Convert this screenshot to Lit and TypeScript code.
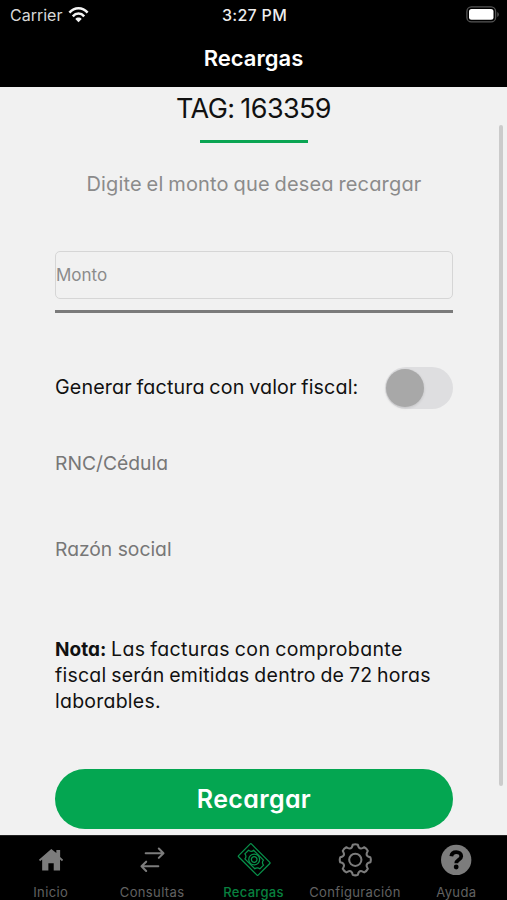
import { LitElement, html, css, svg } from "lit";
import { customElement, property, state } from "lit/decorators.js";
import { classMap } from "lit/directives/class-map.js";

const icons: Record<string, unknown> = {
  home: svg`<path fill="currentColor" d="M18.300 6.200 5.600 17.200l1.200 1.500L8.900 17V28.300h6.400v-7.500h5.500v7.500h6.500V17l2 1.700 1.200-1.500-3.100-2.700V7.100h-3.900v3.200z"/>`,
  swap: svg`<g fill="none" stroke="currentColor" stroke-width="2.100" stroke-linecap="round" stroke-linejoin="round"><path d="M11.500 10.500H29.500M25 5.700l4.800 4.800L25 15.300"/><path d="M24.500 24H7.500M12 19.200 7.200 24l4.800 4.800"/></g>`,
  bill: svg`<g transform="translate(18.200 17) rotate(45)" fill="none" stroke="currentColor" stroke-width="1.300" stroke-linejoin="round"><rect x="-14.200" y="-9.300" width="28.400" height="18.600" rx=".8"/><path d="M-7.200-6.300H7.200A3.600 3.600 0 0 0 10.900-2.700V2.700A3.600 3.600 0 0 0 7.200 6.300H-7.200A3.600 3.600 0 0 0-10.900 2.700V-2.700A3.600 3.600 0 0 0-7.200-6.300Z"/><circle r="5.600"/><circle r="2.900"/></g>`,
  gear: svg`<g fill="none" stroke="currentColor" stroke-width="2.100" stroke-linejoin="round" transform="translate(18.300 17.300)"><path d="M-2.600-15.500Q0-16.500 2.600-15.500C3.100-13 4.200-11.600 5.800-11.600C7-11.600 7.800-12.300 9.200-12.900Q11.700-11.700 12.900-9.200C12.300-7.800 11.600-7 11.600-5.800C11.600-4.200 13-3.100 15.500-2.600Q16.500 0 15.500 2.600C13 3.100 11.600 4.200 11.600 5.800C11.600 7 12.300 7.800 12.900 9.200Q11.700 11.700 9.200 12.900C7.800 12.300 7 11.600 5.800 11.600C4.200 11.600 3.100 13 2.600 15.500Q0 16.500-2.600 15.500C-3.100 13-4.200 11.600-5.800 11.600C-7 11.600-7.800 12.300-9.200 12.900Q-11.700 11.700-12.900 9.200C-12.300 7.800-11.600 7-11.600 5.800C-11.600 4.200-13 3.100-15.500 2.600Q-16.500 0-15.500-2.600C-13-3.100-11.600-4.200-11.600-5.800C-11.600-7-12.300-7.800-12.900-9.200Q-11.700-11.700-9.200-12.900C-7.800-12.300-7-11.600-5.800-11.600C-4.200-11.600-3.100-13-2.600-15.500Z"/><circle r="6.300"/></g>`,
  help: svg`<circle cx="18.200" cy="17.400" r="15.600" fill="currentColor"/><path d="M13.200 13.700c.3-2.800 2.200-4.400 5.100-4.400 3 0 5.100 1.600 5.100 4.200 0 3.900-5.100 3.600-5.100 7.300" fill="none" stroke="#000" stroke-width="3.900"/><circle cx="18.200" cy="24.700" r="2.500" fill="#000"/>`,
};

@customElement("status-bar")
class StatusBar extends LitElement {
  static styles = css`
    :host { display: grid; grid-template-columns: 1fr auto 1fr; align-items: center; height: 30px; padding: 0 8px 0 10px; color: #eee; font-size: 16px; box-sizing: border-box; }
    .carrier { display: flex; align-items: center; gap: 6px; letter-spacing: 0; color: #d8d8d8; }
    .time { font-weight: 500; letter-spacing: .3px; }
    .battery { justify-self: end; }
    svg { display: block; margin-top: -2px; }
    .carrier svg { margin-top: -1px; }
  `;
  render() {
    return html`
      <div class="carrier"><span>Carrier</span>
        <svg width="21" height="16" viewBox="0 0 20 16"><g fill="none" stroke="#f4f4f4" stroke-width="2.500"><path d="M.9 5.700C6-.1 14-.1 19.100 5.700"/><path d="M4.300 9.300c3.200-3.600 8.200-3.600 11.400 0"/></g><path d="M6.800 11.900c1.700-1.800 4.700-1.800 6.400 0L10 15.200z" fill="#f4f4f4"/></svg>
      </div>
      <div class="time">3:27 PM</div>
      <svg class="battery" width="33" height="17" viewBox="0 0 33 17"><rect x=".9" y=".9" width="28.700" height="15" rx="4.500" fill="none" stroke="#555" stroke-width="1.300"/><rect x="3" y="3" width="24.500" height="10.800" rx="2.500" fill="#fff"/><path d="M31.300 6v5q1.500-.6 1.500-2.500T31.300 6" fill="#555"/></svg>
    `;
  }
}

@customElement("tab-item")
class TabItem extends LitElement {
  @property() icon = "";
  @property() label = "";
  @property({ type: Boolean }) active = false;
  static styles = css`
    :host { display: flex; flex: 1; min-width: 0; }
    .tab { display: flex; flex: 1; flex-direction: column; align-items: center; color: #7c7c7c; }
    .tab.active { color: #08914a; }
    svg { display: block; margin-top: 6.500px; }
    .label { margin-top: 6.500px; font-size: 13px; line-height: 16px; letter-spacing: .36px; white-space: nowrap; color: #626262; }
    .active .label { color: #08813f; font-weight: 500; letter-spacing: .3px; }
  `;
  render() {
    return html`<div class=${classMap({ tab: true, active: this.active })}>
      <svg width="36" height="36" viewBox="0 0 36 36">${icons[this.icon]}</svg>
      <span class="label">${this.label}</span>
    </div>`;
  }
}

@customElement("app-root")
class AppRoot extends LitElement {
  @state() private fiscal = false;

  private tabs = [
    { icon: "home", label: "Inicio" },
    { icon: "swap", label: "Consultas" },
    { icon: "bill", label: "Recargas" },
    { icon: "gear", label: "Configuración" },
    { icon: "help", label: "Ayuda" },
  ];

  static styles = css`
    :host { display: flex; flex-direction: column; width: 100%; height: 100vh; overflow: hidden; background: #000; font-family: Inter, sans-serif; }
    .title { height: 57px; box-sizing: border-box; padding-top: 14px; text-align: center; color: #fff; font-size: 22px; line-height: 28px; font-weight: 600; }
    main { position: relative; height: 748px; box-sizing: border-box; padding: 3px 54px 0 55px; background: #f1f1f1; color: #111; font-feature-settings: "cv11"; display: flex; flex-direction: column; }
    .tag { text-align: center; font-size: 27px; line-height: 38px; letter-spacing: -.6px; word-spacing: -1px; }
    .tag span { margin-left: -1px; }
    .rule { width: 108px; height: 3px; margin: 12px auto 0; background: #0aa553; }
    .hint { margin-top: 27px; text-align: center; font-size: 20px; line-height: 28px; letter-spacing: .16px; word-spacing: -1px; color: #8b8b8b; white-space: nowrap; }
    .amount { display: flex; align-items: center; height: 48px; margin-top: 53px; box-sizing: border-box; border: 1.500px solid #d6d6d6; border-radius: 5px; color: #8b8b8b; font-size: 17px; }
    .underline { height: 3px; margin-top: 11px; background: #7b7b7b; }
    .fiscal { display: flex; align-items: center; justify-content: space-between; height: 42px; margin-top: 54px; }
    .fiscal-label { margin-top: -2px; font-size: 19.700px; letter-spacing: .14px; word-spacing: -1px; white-space: nowrap; }
    .switch { display: flex; align-items: center; width: 68px; height: 42px; padding: 0 1px; box-sizing: border-box; border: 0; border-radius: 21px; background: #dedee0; }
    .switch.on { justify-content: flex-end; background: #0aa553; }
    .knob { width: 38px; height: 38px; border-radius: 50%; background: #a8a8a8; box-shadow: 0 1px 3px #0002; }
    .field { font-size: 19.300px; line-height: 28px; color: #777; }
    .rnc { margin-top: 40px; }
    .name { margin-top: 58px; }
    .note { margin-top: 73px; font-size: 19.500px; line-height: 26px; letter-spacing: .24px; word-spacing: -1px; }
    .line { display: block; height: 26px; white-space: nowrap; }
    .l1 { letter-spacing: .36px; }
    .l1 b { font-size: 19px; line-height: 0; letter-spacing: 0; }
    .submit { height: 60px; flex: none; margin-top: 55px; padding: 0; border: 0; border-radius: 30px; background: #04a651; color: #fff; font: 600 25px/60px Inter, sans-serif; font-feature-settings: "cv11"; letter-spacing: .35px; }
    .scroll { position: absolute; right: 4px; top: 38px; width: 4px; height: 661px; border-radius: 2px; background: #cbcbcb; }
    nav { display: flex; height: 65px; box-sizing: border-box; border-top: 1px solid #222; }
  `;

  render() {
    return html`
      <status-bar></status-bar>
      <div class="title">Recargas</div>
      <main>
        <div class="tag"><span>TAG: 163359</span></div>
        <div class="rule"></div>
        <div class="hint"><span>Digite el monto que desea recargar</span></div>
        <div class="amount"><span>Monto</span></div>
        <div class="underline"></div>
        <div class="fiscal">
          <span class="fiscal-label">Generar factura con valor fiscal:</span>
          <button class=${classMap({ switch: true, on: this.fiscal })} @click=${() => (this.fiscal = !this.fiscal)}><span class="knob"></span></button>
        </div>
        <div class="field rnc"><span>RNC/Cédula</span></div>
        <div class="field name"><span>Razón social</span></div>
        <div class="note">
          <span class="line l1"><b>Nota:</b> Las facturas con comprobante</span>
          <span class="line l2">fiscal serán emitidas dentro de 72 horas</span>
          <span class="line l3">laborables.</span>
        </div>
        <button class="submit">Recargar</button>
        <div class="scroll"></div>
      </main>
      <nav>${this.tabs.map((t) => html`<tab-item icon=${t.icon} label=${t.label} ?active=${t.label === "Recargas"}></tab-item>`)}</nav>
    `;
  }
}
